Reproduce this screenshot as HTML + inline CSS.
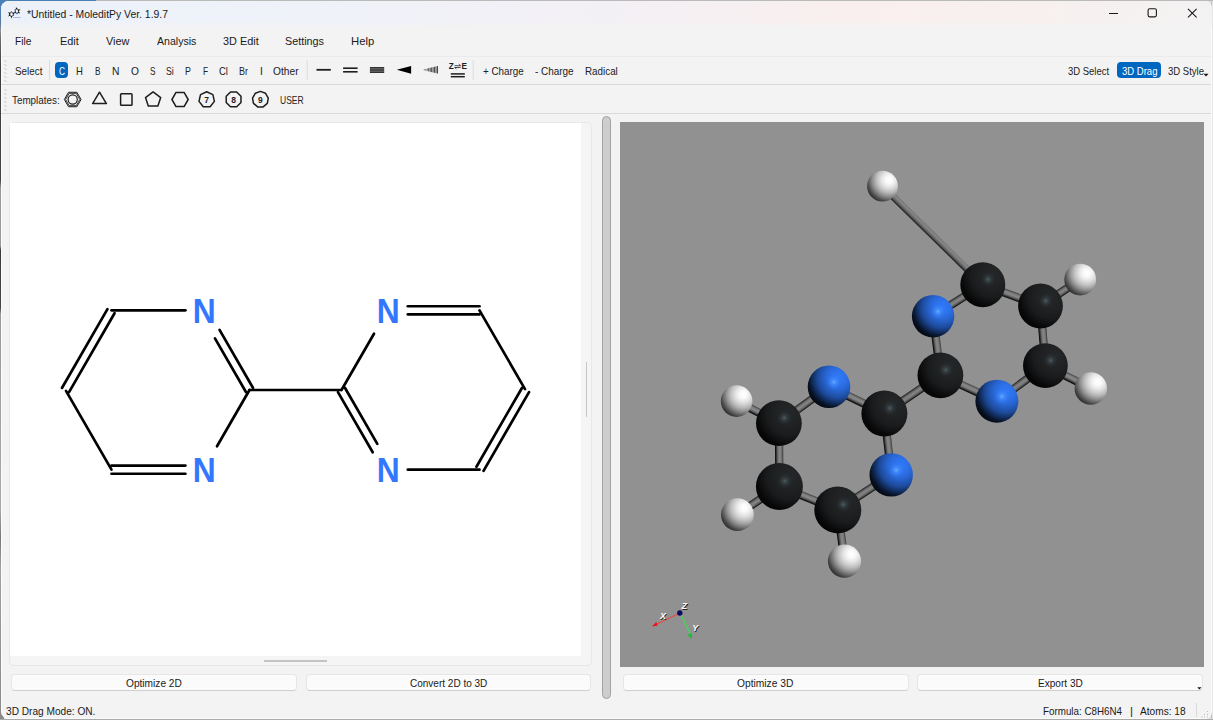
<!DOCTYPE html>
<html><head><meta charset="utf-8"><title>MoleditPy</title>
<style>
html,body{margin:0;padding:0;}
body{width:1213px;height:720px;overflow:hidden;position:relative;background:#f3f3f3;font-family:"Liberation Sans", sans-serif;}
.t{position:absolute;white-space:nowrap;font-family:"Liberation Sans", sans-serif;transform-origin:0 0;}
.abs{position:absolute;}

#win{position:absolute;left:1px;top:1px;width:1210.8px;height:717.5px;background:#f3f3f3;border-radius:8px;overflow:hidden;box-shadow:inset 0 0 0 1px rgba(255,255,255,0.75);}
#title{position:absolute;left:0;top:0;width:1213px;height:26.5px;background:linear-gradient(90deg,#ecf1f9 0%,#eff2f9 25%,#f3f0f5 50%,#f9efee 70%,#f7f0ef 85%,#f3f2f2 100%);}
.hl{position:absolute;height:1px;background:#d9d9d9;}
.btn{position:absolute;background:#fbfbfb;border:1px solid #e6e6e6;border-bottom-color:#cfcfcf;border-radius:4px;box-sizing:border-box;}
.sel{position:absolute;background:#0067c0;border-radius:4px;}

</style></head><body>

<div id="bgd" class="abs" style="left:0;top:0;width:1213px;height:720px;background:#e4e4e4"></div>
<div class="abs" style="left:0;top:0;width:1213px;height:1px;background:#bababa"></div>
<div class="abs" style="left:0;top:0;width:96px;height:12px;background:#4b80b6"></div>
<div class="abs" style="left:0;top:8px;width:4px;height:712px;background:linear-gradient(180deg,#4b80b6 0px,#56779a 14px,#8a8f96 22px,#6a6a6a 32px,#3c3c3c 60px,#444 172px,#999 180px,#999 238px,#3a3a3a 242px,#444 300px,#9a9a9a 306px,#a8a8a8 500px,#777 530px,#a0a0a0 560px,#8a8a8a 700px)"></div>
<div class="abs" style="left:0;top:718.5px;width:1213px;height:1.5px;background:#a9a9a9"></div>
<div class="abs" style="left:1211px;top:1px;width:2px;height:718px;background:linear-gradient(90deg,#c4c4c4 0,#c4c4c4 1.1px,#e6e6e6 1.1px)"></div>
<div id="win">
<div id="title"></div><div class="abs" style="left:0;top:19.5px;width:1213px;height:7px;background:linear-gradient(180deg,rgba(243,243,243,0),#f3f3f3)"></div>
</div>
<div class="hl" style="left:1px;top:56px;width:1210px;background:#ebebeb"></div>
<div class="hl" style="left:1px;top:84px;width:1210px"></div>
<div class="hl" style="left:1px;top:113px;width:1210px"></div>
<div class="sel" style="left:54.7px;top:62.1px;width:13.7px;height:15.8px"></div>
<div class="sel" style="left:1116.8px;top:62.2px;width:44.3px;height:15.8px"></div>
<div class="abs" style="left:8.5px;top:122.4px;width:583.5px;height:543.2px;border:1px solid #e8e8e8;border-radius:5px;box-sizing:border-box;background:#f5f5f5"></div>
<div class="abs" style="left:10px;top:123px;width:571.4px;height:533px;background:#fff"></div>
<div class="abs" style="left:263.5px;top:660px;width:63px;height:1.5px;background:#c4c4c4"></div>
<div class="abs" style="left:585.5px;top:362px;width:1.5px;height:55px;background:#c4c4c4"></div>
<div class="abs" style="left:602px;top:116px;width:9px;height:583px;background:#cdcdcd;border:1px solid #a2a2a2;border-radius:5px;box-sizing:border-box"></div>
<svg class="abs" style="left:0;top:120px" width="600" height="545" viewBox="0 120 600 545"><g stroke="#000" stroke-width="2.7" stroke-linecap="round"><line x1="69.05" y1="392.05" x2="114.55" y2="313.24"/><line x1="61.95" y1="387.95" x2="107.45" y2="309.14"/><line x1="111.50" y1="310.33" x2="185.40" y2="310.33"/><line x1="214.95" y1="338.36" x2="245.95" y2="392.05"/><line x1="219.55" y1="329.93" x2="253.05" y2="387.95"/><line x1="249.50" y1="390.00" x2="217.00" y2="446.29"/><line x1="185.40" y1="465.57" x2="111.50" y2="465.57"/><line x1="185.40" y1="473.77" x2="111.50" y2="473.77"/><line x1="111.50" y1="469.67" x2="66.00" y2="390.87"/><line x1="249.50" y1="390.00" x2="340.50" y2="390.00"/><line x1="341.50" y1="390.00" x2="374.00" y2="333.71"/><line x1="407.80" y1="314.43" x2="479.50" y2="314.43"/><line x1="407.80" y1="306.23" x2="479.50" y2="306.23"/><line x1="479.50" y1="310.33" x2="525.00" y2="389.13"/><line x1="521.95" y1="387.95" x2="476.45" y2="466.76"/><line x1="529.05" y1="392.05" x2="483.55" y2="470.86"/><line x1="479.50" y1="469.67" x2="407.80" y2="469.67"/><line x1="377.30" y1="443.81" x2="345.05" y2="387.95"/><line x1="372.70" y1="452.24" x2="337.95" y2="392.05"/></g><text transform="translate(204.25,323.03) scale(0.92,1)" x="0" y="0" text-anchor="middle" font-family="Liberation Sans" font-weight="700" font-size="34.6" fill="#3377ff">N</text><text transform="translate(204.25,482.37) scale(0.92,1)" x="0" y="0" text-anchor="middle" font-family="Liberation Sans" font-weight="700" font-size="34.6" fill="#3377ff">N</text><text transform="translate(388.25,323.03) scale(0.92,1)" x="0" y="0" text-anchor="middle" font-family="Liberation Sans" font-weight="700" font-size="34.6" fill="#3377ff">N</text><text transform="translate(388.25,482.37) scale(0.92,1)" x="0" y="0" text-anchor="middle" font-family="Liberation Sans" font-weight="700" font-size="34.6" fill="#3377ff">N</text></svg>
<svg class="abs" style="left:620px;top:122px;background:#919191" width="584" height="545" viewBox="620 122 584 545"><defs>
<radialGradient id="gC" cx="0.71" cy="0.29" r="0.8"><stop offset="0" stop-color="#25282a"/><stop offset="0.375" stop-color="#1f2122"/><stop offset="0.6" stop-color="#191b1c"/><stop offset="0.75" stop-color="#101112"/><stop offset="0.875" stop-color="#080808"/><stop offset="1" stop-color="#040404"/></radialGradient>
<radialGradient id="sC" cx="0.617" cy="0.383" r="0.17"><stop offset="0" stop-color="#52636a" stop-opacity="0.9"/><stop offset="0.3" stop-color="#46565c" stop-opacity="0.5"/><stop offset="1" stop-color="#2a2d2e" stop-opacity="0"/></radialGradient>
<radialGradient id="gN" cx="0.71" cy="0.29" r="0.8"><stop offset="0" stop-color="#3079f8"/><stop offset="0.2" stop-color="#2d72ec"/><stop offset="0.375" stop-color="#2865d2"/><stop offset="0.6" stop-color="#1d4a9a"/><stop offset="0.75" stop-color="#112c5c"/><stop offset="0.875" stop-color="#071224"/><stop offset="1" stop-color="#03070e"/></radialGradient>
<radialGradient id="sN" cx="0.615" cy="0.39" r="0.19"><stop offset="0" stop-color="#66acff" stop-opacity="1"/><stop offset="0.35" stop-color="#4a94ff" stop-opacity="0.6"/><stop offset="1" stop-color="#3079f5" stop-opacity="0"/></radialGradient>
<radialGradient id="gH" cx="0.71" cy="0.29" r="0.8"><stop offset="0" stop-color="#ffffff"/><stop offset="0.13" stop-color="#fbfbfb"/><stop offset="0.3" stop-color="#e5e5e5"/><stop offset="0.5" stop-color="#bebebe"/><stop offset="0.65" stop-color="#969696"/><stop offset="0.78" stop-color="#6c6c6c"/><stop offset="0.9" stop-color="#444444"/><stop offset="1" stop-color="#2c2c2c"/></radialGradient>
</defs><linearGradient id="b0" gradientUnits="userSpaceOnUse" x1="930.27" y1="237.88" x2="935.03" y2="233.02"><stop offset="0.000" stop-color="#161616"/><stop offset="0.150" stop-color="#363636"/><stop offset="0.300" stop-color="#585858"/><stop offset="0.500" stop-color="#747474"/><stop offset="0.700" stop-color="#848484"/><stop offset="0.875" stop-color="#828282"/><stop offset="0.960" stop-color="#727272"/><stop offset="1.000" stop-color="#626262"/></linearGradient><line x1="882.5" y1="186.2" x2="982.8" y2="284.7" stroke="url(#b0)" stroke-width="6.8"/><linearGradient id="b1" gradientUnits="userSpaceOnUse" x1="1010.23" y1="299.20" x2="1013.07" y2="291.50"><stop offset="0.000" stop-color="#0c0c0c"/><stop offset="0.050" stop-color="#0c0c0c"/><stop offset="0.150" stop-color="#272727"/><stop offset="0.275" stop-color="#545454"/><stop offset="0.400" stop-color="#737373"/><stop offset="0.500" stop-color="#828282"/><stop offset="0.600" stop-color="#868686"/><stop offset="0.725" stop-color="#7f7f7f"/><stop offset="0.850" stop-color="#6a6a6a"/><stop offset="0.950" stop-color="#4e4e4e"/><stop offset="1.000" stop-color="#3c3c3c"/></linearGradient><line x1="982.8" y1="284.7" x2="1040.5" y2="306.0" stroke="url(#b1)" stroke-width="8.2"/><linearGradient id="b2" gradientUnits="userSpaceOnUse" x1="1062.62" y1="296.21" x2="1058.08" y2="289.39"><stop offset="0.000" stop-color="#0c0c0c"/><stop offset="0.050" stop-color="#191919"/><stop offset="0.150" stop-color="#414141"/><stop offset="0.275" stop-color="#656565"/><stop offset="0.400" stop-color="#7b7b7b"/><stop offset="0.500" stop-color="#828282"/><stop offset="0.600" stop-color="#7f7f7f"/><stop offset="0.725" stop-color="#6e6e6e"/><stop offset="0.850" stop-color="#4f4f4f"/><stop offset="0.950" stop-color="#2c2c2c"/><stop offset="1.000" stop-color="#171717"/></linearGradient><line x1="1040.5" y1="306.0" x2="1080.2" y2="279.6" stroke="url(#b2)" stroke-width="8.2"/><linearGradient id="b3" gradientUnits="userSpaceOnUse" x1="1038.86" y1="336.14" x2="1047.04" y2="335.46"><stop offset="0.000" stop-color="#0c0c0c"/><stop offset="0.050" stop-color="#0c0c0c"/><stop offset="0.150" stop-color="#2c2c2c"/><stop offset="0.275" stop-color="#585858"/><stop offset="0.400" stop-color="#757575"/><stop offset="0.500" stop-color="#828282"/><stop offset="0.600" stop-color="#858585"/><stop offset="0.725" stop-color="#7c7c7c"/><stop offset="0.850" stop-color="#646464"/><stop offset="0.950" stop-color="#474747"/><stop offset="1.000" stop-color="#353535"/></linearGradient><line x1="1040.5" y1="306.0" x2="1045.4" y2="365.6" stroke="url(#b3)" stroke-width="8.2"/><linearGradient id="b4" gradientUnits="userSpaceOnUse" x1="1066.25" y1="380.71" x2="1069.95" y2="373.39"><stop offset="0.000" stop-color="#0c0c0c"/><stop offset="0.050" stop-color="#0c0c0c"/><stop offset="0.150" stop-color="#252525"/><stop offset="0.275" stop-color="#535353"/><stop offset="0.400" stop-color="#737373"/><stop offset="0.500" stop-color="#828282"/><stop offset="0.600" stop-color="#878787"/><stop offset="0.725" stop-color="#808080"/><stop offset="0.850" stop-color="#6b6b6b"/><stop offset="0.950" stop-color="#505050"/><stop offset="1.000" stop-color="#3e3e3e"/></linearGradient><line x1="1045.4" y1="365.6" x2="1090.8" y2="388.5" stroke="url(#b4)" stroke-width="8.2"/><linearGradient id="b5" gradientUnits="userSpaceOnUse" x1="1023.58" y1="386.71" x2="1018.72" y2="380.09"><stop offset="0.000" stop-color="#0c0c0c"/><stop offset="0.050" stop-color="#1b1b1b"/><stop offset="0.150" stop-color="#424242"/><stop offset="0.275" stop-color="#666666"/><stop offset="0.400" stop-color="#7b7b7b"/><stop offset="0.500" stop-color="#828282"/><stop offset="0.600" stop-color="#7e7e7e"/><stop offset="0.725" stop-color="#6d6d6d"/><stop offset="0.850" stop-color="#4e4e4e"/><stop offset="0.950" stop-color="#2a2a2a"/><stop offset="1.000" stop-color="#141414"/></linearGradient><line x1="1045.4" y1="365.6" x2="996.9" y2="401.2" stroke="url(#b5)" stroke-width="8.2"/><linearGradient id="b6" gradientUnits="userSpaceOnUse" x1="966.94" y1="391.98" x2="970.36" y2="384.52"><stop offset="0.000" stop-color="#0c0c0c"/><stop offset="0.050" stop-color="#0c0c0c"/><stop offset="0.150" stop-color="#252525"/><stop offset="0.275" stop-color="#545454"/><stop offset="0.400" stop-color="#737373"/><stop offset="0.500" stop-color="#828282"/><stop offset="0.600" stop-color="#878787"/><stop offset="0.725" stop-color="#808080"/><stop offset="0.850" stop-color="#6b6b6b"/><stop offset="0.950" stop-color="#4f4f4f"/><stop offset="1.000" stop-color="#3e3e3e"/></linearGradient><line x1="996.9" y1="401.2" x2="940.4" y2="375.3" stroke="url(#b6)" stroke-width="8.2"/><linearGradient id="b7" gradientUnits="userSpaceOnUse" x1="932.68" y1="346.25" x2="940.82" y2="345.25"><stop offset="0.000" stop-color="#0c0c0c"/><stop offset="0.050" stop-color="#0c0c0c"/><stop offset="0.150" stop-color="#2b2b2b"/><stop offset="0.275" stop-color="#575757"/><stop offset="0.400" stop-color="#757575"/><stop offset="0.500" stop-color="#828282"/><stop offset="0.600" stop-color="#858585"/><stop offset="0.725" stop-color="#7d7d7d"/><stop offset="0.850" stop-color="#656565"/><stop offset="0.950" stop-color="#484848"/><stop offset="1.000" stop-color="#363636"/></linearGradient><line x1="940.4" y1="375.3" x2="933.1" y2="316.2" stroke="url(#b7)" stroke-width="8.2"/><linearGradient id="b8" gradientUnits="userSpaceOnUse" x1="960.14" y1="303.91" x2="955.76" y2="296.99"><stop offset="0.000" stop-color="#0c0c0c"/><stop offset="0.050" stop-color="#181818"/><stop offset="0.150" stop-color="#404040"/><stop offset="0.275" stop-color="#656565"/><stop offset="0.400" stop-color="#7b7b7b"/><stop offset="0.500" stop-color="#828282"/><stop offset="0.600" stop-color="#7f7f7f"/><stop offset="0.725" stop-color="#6f6f6f"/><stop offset="0.850" stop-color="#505050"/><stop offset="0.950" stop-color="#2d2d2d"/><stop offset="1.000" stop-color="#181818"/></linearGradient><line x1="933.1" y1="316.2" x2="982.8" y2="284.7" stroke="url(#b8)" stroke-width="8.2"/><linearGradient id="b9" gradientUnits="userSpaceOnUse" x1="914.71" y1="397.79" x2="910.09" y2="391.01"><stop offset="0.000" stop-color="#0c0c0c"/><stop offset="0.050" stop-color="#1a1a1a"/><stop offset="0.150" stop-color="#414141"/><stop offset="0.275" stop-color="#656565"/><stop offset="0.400" stop-color="#7b7b7b"/><stop offset="0.500" stop-color="#828282"/><stop offset="0.600" stop-color="#7f7f7f"/><stop offset="0.725" stop-color="#6e6e6e"/><stop offset="0.850" stop-color="#4f4f4f"/><stop offset="0.950" stop-color="#2b2b2b"/><stop offset="1.000" stop-color="#161616"/></linearGradient><line x1="940.4" y1="375.3" x2="884.4" y2="413.5" stroke="url(#b9)" stroke-width="8.2"/><linearGradient id="b10" gradientUnits="userSpaceOnUse" x1="854.92" y1="403.84" x2="858.48" y2="396.46"><stop offset="0.000" stop-color="#0c0c0c"/><stop offset="0.050" stop-color="#0c0c0c"/><stop offset="0.150" stop-color="#252525"/><stop offset="0.275" stop-color="#535353"/><stop offset="0.400" stop-color="#737373"/><stop offset="0.500" stop-color="#828282"/><stop offset="0.600" stop-color="#878787"/><stop offset="0.725" stop-color="#808080"/><stop offset="0.850" stop-color="#6b6b6b"/><stop offset="0.950" stop-color="#4f4f4f"/><stop offset="1.000" stop-color="#3e3e3e"/></linearGradient><line x1="884.4" y1="413.5" x2="829.0" y2="386.8" stroke="url(#b10)" stroke-width="8.2"/><linearGradient id="b11" gradientUnits="userSpaceOnUse" x1="806.36" y1="408.32" x2="801.54" y2="401.68"><stop offset="0.000" stop-color="#0c0c0c"/><stop offset="0.050" stop-color="#1b1b1b"/><stop offset="0.150" stop-color="#424242"/><stop offset="0.275" stop-color="#666666"/><stop offset="0.400" stop-color="#7b7b7b"/><stop offset="0.500" stop-color="#828282"/><stop offset="0.600" stop-color="#7f7f7f"/><stop offset="0.725" stop-color="#6e6e6e"/><stop offset="0.850" stop-color="#4e4e4e"/><stop offset="0.950" stop-color="#2a2a2a"/><stop offset="1.000" stop-color="#151515"/></linearGradient><line x1="829.0" y1="386.8" x2="778.9" y2="423.2" stroke="url(#b11)" stroke-width="8.2"/><linearGradient id="b12" gradientUnits="userSpaceOnUse" x1="755.85" y1="415.78" x2="759.65" y2="408.52"><stop offset="0.000" stop-color="#0c0c0c"/><stop offset="0.050" stop-color="#0c0c0c"/><stop offset="0.150" stop-color="#252525"/><stop offset="0.275" stop-color="#535353"/><stop offset="0.400" stop-color="#737373"/><stop offset="0.500" stop-color="#828282"/><stop offset="0.600" stop-color="#878787"/><stop offset="0.725" stop-color="#808080"/><stop offset="0.850" stop-color="#6b6b6b"/><stop offset="0.950" stop-color="#505050"/><stop offset="1.000" stop-color="#3f3f3f"/></linearGradient><line x1="778.9" y1="423.2" x2="736.6" y2="401.1" stroke="url(#b12)" stroke-width="8.2"/><linearGradient id="b13" gradientUnits="userSpaceOnUse" x1="775.05" y1="454.88" x2="783.25" y2="454.82"><stop offset="0.000" stop-color="#0c0c0c"/><stop offset="0.050" stop-color="#0c0c0c"/><stop offset="0.150" stop-color="#2e2e2e"/><stop offset="0.275" stop-color="#595959"/><stop offset="0.400" stop-color="#757575"/><stop offset="0.500" stop-color="#828282"/><stop offset="0.600" stop-color="#848484"/><stop offset="0.725" stop-color="#7b7b7b"/><stop offset="0.850" stop-color="#626262"/><stop offset="0.950" stop-color="#444444"/><stop offset="1.000" stop-color="#323232"/></linearGradient><line x1="778.9" y1="423.2" x2="779.4" y2="486.5" stroke="url(#b13)" stroke-width="8.2"/><linearGradient id="b14" gradientUnits="userSpaceOnUse" x1="760.68" y1="503.96" x2="756.12" y2="497.14"><stop offset="0.000" stop-color="#0c0c0c"/><stop offset="0.050" stop-color="#191919"/><stop offset="0.150" stop-color="#414141"/><stop offset="0.275" stop-color="#656565"/><stop offset="0.400" stop-color="#7b7b7b"/><stop offset="0.500" stop-color="#828282"/><stop offset="0.600" stop-color="#7f7f7f"/><stop offset="0.725" stop-color="#6e6e6e"/><stop offset="0.850" stop-color="#4f4f4f"/><stop offset="0.950" stop-color="#2c2c2c"/><stop offset="1.000" stop-color="#171717"/></linearGradient><line x1="779.4" y1="486.5" x2="737.4" y2="514.6" stroke="url(#b14)" stroke-width="8.2"/><linearGradient id="b15" gradientUnits="userSpaceOnUse" x1="807.08" y1="502.01" x2="810.12" y2="494.39"><stop offset="0.000" stop-color="#0c0c0c"/><stop offset="0.050" stop-color="#0c0c0c"/><stop offset="0.150" stop-color="#262626"/><stop offset="0.275" stop-color="#545454"/><stop offset="0.400" stop-color="#737373"/><stop offset="0.500" stop-color="#828282"/><stop offset="0.600" stop-color="#878787"/><stop offset="0.725" stop-color="#808080"/><stop offset="0.850" stop-color="#6a6a6a"/><stop offset="0.950" stop-color="#4e4e4e"/><stop offset="1.000" stop-color="#3d3d3d"/></linearGradient><line x1="779.4" y1="486.5" x2="837.8" y2="509.9" stroke="url(#b15)" stroke-width="8.2"/><linearGradient id="b16" gradientUnits="userSpaceOnUse" x1="837.08" y1="536.08" x2="845.22" y2="535.02"><stop offset="0.000" stop-color="#0c0c0c"/><stop offset="0.050" stop-color="#0c0c0c"/><stop offset="0.150" stop-color="#2b2b2b"/><stop offset="0.275" stop-color="#575757"/><stop offset="0.400" stop-color="#747474"/><stop offset="0.500" stop-color="#828282"/><stop offset="0.600" stop-color="#858585"/><stop offset="0.725" stop-color="#7d7d7d"/><stop offset="0.850" stop-color="#656565"/><stop offset="0.950" stop-color="#484848"/><stop offset="1.000" stop-color="#363636"/></linearGradient><line x1="837.8" y1="509.9" x2="844.5" y2="561.2" stroke="url(#b16)" stroke-width="8.2"/><linearGradient id="b17" gradientUnits="userSpaceOnUse" x1="866.75" y1="495.83" x2="862.25" y2="488.97"><stop offset="0.000" stop-color="#0c0c0c"/><stop offset="0.050" stop-color="#191919"/><stop offset="0.150" stop-color="#414141"/><stop offset="0.275" stop-color="#656565"/><stop offset="0.400" stop-color="#7b7b7b"/><stop offset="0.500" stop-color="#828282"/><stop offset="0.600" stop-color="#7f7f7f"/><stop offset="0.725" stop-color="#6f6f6f"/><stop offset="0.850" stop-color="#505050"/><stop offset="0.950" stop-color="#2c2c2c"/><stop offset="1.000" stop-color="#171717"/></linearGradient><line x1="837.8" y1="509.9" x2="891.2" y2="474.9" stroke="url(#b17)" stroke-width="8.2"/><linearGradient id="b18" gradientUnits="userSpaceOnUse" x1="883.72" y1="444.65" x2="891.88" y2="443.75"><stop offset="0.000" stop-color="#0c0c0c"/><stop offset="0.050" stop-color="#0c0c0c"/><stop offset="0.150" stop-color="#2b2b2b"/><stop offset="0.275" stop-color="#575757"/><stop offset="0.400" stop-color="#757575"/><stop offset="0.500" stop-color="#828282"/><stop offset="0.600" stop-color="#858585"/><stop offset="0.725" stop-color="#7c7c7c"/><stop offset="0.850" stop-color="#656565"/><stop offset="0.950" stop-color="#484848"/><stop offset="1.000" stop-color="#353535"/></linearGradient><line x1="891.2" y1="474.9" x2="884.4" y2="413.5" stroke="url(#b18)" stroke-width="8.2"/><circle cx="882.5" cy="186.2" r="15.4" fill="url(#gH)"/><circle cx="982.8" cy="284.7" r="22.5" fill="url(#gC)"/><circle cx="982.8" cy="284.7" r="22.5" fill="url(#sC)"/><circle cx="1040.5" cy="306.0" r="22.4" fill="url(#gC)"/><circle cx="1040.5" cy="306.0" r="22.4" fill="url(#sC)"/><circle cx="1080.2" cy="279.6" r="15.9" fill="url(#gH)"/><circle cx="933.1" cy="316.2" r="21.2" fill="url(#gN)"/><circle cx="933.1" cy="316.2" r="21.2" fill="url(#sN)"/><circle cx="1045.4" cy="365.6" r="22.4" fill="url(#gC)"/><circle cx="1045.4" cy="365.6" r="22.4" fill="url(#sC)"/><circle cx="1090.8" cy="388.5" r="16.2" fill="url(#gH)"/><circle cx="940.4" cy="375.3" r="22.9" fill="url(#gC)"/><circle cx="940.4" cy="375.3" r="22.9" fill="url(#sC)"/><circle cx="996.9" cy="401.2" r="21.5" fill="url(#gN)"/><circle cx="996.9" cy="401.2" r="21.5" fill="url(#sN)"/><circle cx="829.0" cy="386.8" r="21.3" fill="url(#gN)"/><circle cx="829.0" cy="386.8" r="21.3" fill="url(#sN)"/><circle cx="884.4" cy="413.5" r="23.0" fill="url(#gC)"/><circle cx="884.4" cy="413.5" r="23.0" fill="url(#sC)"/><circle cx="736.6" cy="401.1" r="15.8" fill="url(#gH)"/><circle cx="778.9" cy="423.2" r="22.9" fill="url(#gC)"/><circle cx="778.9" cy="423.2" r="22.9" fill="url(#sC)"/><circle cx="891.2" cy="474.9" r="21.7" fill="url(#gN)"/><circle cx="891.2" cy="474.9" r="21.7" fill="url(#sN)"/><circle cx="779.4" cy="486.5" r="23.5" fill="url(#gC)"/><circle cx="779.4" cy="486.5" r="23.5" fill="url(#sC)"/><circle cx="837.8" cy="509.9" r="23.5" fill="url(#gC)"/><circle cx="837.8" cy="509.9" r="23.5" fill="url(#sC)"/><circle cx="737.4" cy="514.6" r="16.4" fill="url(#gH)"/><circle cx="844.5" cy="561.2" r="16.6" fill="url(#gH)"/><line x1="680" y1="613" x2="656" y2="624.5" stroke="#e84a4a" stroke-width="1.2"/><polygon points="652,626.5 656.2,622 657.8,625.6" fill="#ee1010"/><line x1="680" y1="613" x2="690.5" y2="634" stroke="#3fd654" stroke-width="1.4"/><polygon points="692,639 687.6,635 691.6,633" fill="#18c030"/><circle cx="679.8" cy="613" r="2.7" fill="#0a0a66"/><text x="660.8" y="619.6999999999999" font-family="Liberation Sans" font-weight="700" font-style="italic" font-size="9" fill="#222">X</text><text x="660.0" y="618.9" font-family="Liberation Sans" font-weight="700" font-style="italic" font-size="9" fill="#fff">X</text><text x="682.4" y="609.5999999999999" font-family="Liberation Sans" font-weight="700" font-style="italic" font-size="9" fill="#222">Z</text><text x="681.6" y="608.8" font-family="Liberation Sans" font-weight="700" font-style="italic" font-size="9" fill="#fff">Z</text><text x="693.0999999999999" y="631.6999999999999" font-family="Liberation Sans" font-weight="700" font-style="italic" font-size="9" fill="#222">Y</text><text x="692.3" y="630.9" font-family="Liberation Sans" font-weight="700" font-style="italic" font-size="9" fill="#fff">Y</text></svg>
<div class="btn" style="left:10.5px;top:674.2px;width:286px;height:17.2px"></div>
<div class="btn" style="left:305.5px;top:674.2px;width:285px;height:17.2px"></div>
<div class="btn" style="left:622.5px;top:674.2px;width:286px;height:17.2px"></div>
<div class="btn" style="left:917px;top:674.2px;width:285.5px;height:17.2px"></div>
<svg class="abs" style="left:1190px;top:680px" width="20" height="40" viewBox="1190 680 20 40"><polygon points="1197.3,687.2 1201.5,687.2 1199.4,689.6" fill="#111"/>
<rect x="1196" y="703" width="1" height="14" fill="#d9d9d9"/>
<g fill="#b9b9b9"><rect x="1207" y="711" width="1" height="1"/><rect x="1207" y="714" width="1" height="1"/><rect x="1204" y="714" width="1" height="1"/><rect x="1207" y="716.5" width="1" height="1"/><rect x="1204" y="716.5" width="1" height="1"/><rect x="1201.5" y="716.5" width="1" height="1"/></g></svg>
<svg class="abs" style="left:0;top:0" width="1213" height="120" viewBox="0 0 1213 120"><rect x="4.4" y="60" width="1" height="1" fill="#c2c2c2"/><rect x="5.4" y="61" width="1" height="1" fill="#c2c2c2"/><rect x="4.4" y="64" width="1" height="1" fill="#c2c2c2"/><rect x="5.4" y="65" width="1" height="1" fill="#c2c2c2"/><rect x="4.4" y="68" width="1" height="1" fill="#c2c2c2"/><rect x="5.4" y="69" width="1" height="1" fill="#c2c2c2"/><rect x="4.4" y="72" width="1" height="1" fill="#c2c2c2"/><rect x="5.4" y="73" width="1" height="1" fill="#c2c2c2"/><rect x="4.4" y="76" width="1" height="1" fill="#c2c2c2"/><rect x="5.4" y="77" width="1" height="1" fill="#c2c2c2"/><rect x="4.4" y="80" width="1" height="1" fill="#c2c2c2"/><rect x="5.4" y="81" width="1" height="1" fill="#c2c2c2"/><rect x="4.4" y="89" width="1" height="1" fill="#c2c2c2"/><rect x="5.4" y="90" width="1" height="1" fill="#c2c2c2"/><rect x="4.4" y="93" width="1" height="1" fill="#c2c2c2"/><rect x="5.4" y="94" width="1" height="1" fill="#c2c2c2"/><rect x="4.4" y="97" width="1" height="1" fill="#c2c2c2"/><rect x="5.4" y="98" width="1" height="1" fill="#c2c2c2"/><rect x="4.4" y="101" width="1" height="1" fill="#c2c2c2"/><rect x="5.4" y="102" width="1" height="1" fill="#c2c2c2"/><rect x="4.4" y="105" width="1" height="1" fill="#c2c2c2"/><rect x="5.4" y="106" width="1" height="1" fill="#c2c2c2"/><rect x="4.4" y="109" width="1" height="1" fill="#c2c2c2"/><rect x="5.4" y="110" width="1" height="1" fill="#c2c2c2"/><rect x="49.0" y="60" width="1" height="20" fill="#dcdcdc"/><rect x="306.7" y="60" width="1" height="20" fill="#dcdcdc"/><rect x="472.7" y="60" width="1" height="20" fill="#dcdcdc"/><line x1="316.5" y1="69.8" x2="330.8" y2="69.8" stroke="#1e1e1e" stroke-width="1.8"/><line x1="343.1" y1="68.2" x2="357.6" y2="68.2" stroke="#1e1e1e" stroke-width="1.6"/><line x1="343.1" y1="71.8" x2="357.6" y2="71.8" stroke="#1e1e1e" stroke-width="1.6"/><line x1="369.9" y1="67.9" x2="384.2" y2="67.9" stroke="#1e1e1e" stroke-width="1.6"/><line x1="369.9" y1="70.0" x2="384.2" y2="70.0" stroke="#1e1e1e" stroke-width="1.6"/><line x1="369.9" y1="72.1" x2="384.2" y2="72.1" stroke="#1e1e1e" stroke-width="1.6"/><polygon points="396.8,69.8 411.1,65.9 411.1,73.8" fill="#000"/><line x1="424.30" y1="69.23" x2="424.30" y2="70.37" stroke="#6a6a6a" stroke-width="0.95"/><line x1="425.77" y1="68.88" x2="425.77" y2="70.72" stroke="#6a6a6a" stroke-width="0.95"/><line x1="427.24" y1="68.52" x2="427.24" y2="71.08" stroke="#6a6a6a" stroke-width="0.95"/><line x1="428.71" y1="68.17" x2="428.71" y2="71.43" stroke="#3c3c3c" stroke-width="0.95"/><line x1="430.18" y1="67.81" x2="430.18" y2="71.79" stroke="#3c3c3c" stroke-width="0.95"/><line x1="431.65" y1="67.46" x2="431.65" y2="72.14" stroke="#3c3c3c" stroke-width="0.95"/><line x1="433.12" y1="67.10" x2="433.12" y2="72.50" stroke="#3c3c3c" stroke-width="0.95"/><line x1="434.59" y1="66.75" x2="434.59" y2="72.85" stroke="#3c3c3c" stroke-width="0.95"/><line x1="436.06" y1="66.39" x2="436.06" y2="73.21" stroke="#3c3c3c" stroke-width="0.95"/><line x1="437.53" y1="66.04" x2="437.53" y2="73.56" stroke="#3c3c3c" stroke-width="0.95"/><text x="451.2" y="69.2" text-anchor="middle" font-family="Liberation Sans" font-weight="700" font-size="8.2" fill="#1e1e1e">Z</text><text x="464.3" y="69.2" text-anchor="middle" font-family="Liberation Sans" font-weight="700" font-size="8.2" fill="#1e1e1e">E</text><path d="M454.6 65.7 H460.6 L458.8 64.2 M460.6 67.5 H454.6 L456.4 69.0" stroke="#1e1e1e" stroke-width="0.8" fill="none"/><line x1="450.8" y1="73.9" x2="464.8" y2="73.9" stroke="#1e1e1e" stroke-width="1.5"/><line x1="450.8" y1="76.7" x2="464.8" y2="76.7" stroke="#1e1e1e" stroke-width="1.5"/><polygon points="1203.5,73.8 1208.5,73.8 1206,76.6" fill="#111"/><line x1="1109" y1="13.5" x2="1118" y2="13.5" stroke="#1a1a1a" stroke-width="1"/><rect x="1148.1" y="8.75" width="8.3" height="8.1" rx="1.5" fill="none" stroke="#1a1a1a" stroke-width="1.1"/><path d="M1188 8.8 L1196.6 17.4 M1196.6 8.8 L1188 17.4" stroke="#1a1a1a" stroke-width="1.1" fill="none"/><polygon points="81.05,99.50 76.88,106.73 68.53,106.73 64.35,99.50 68.53,92.27 76.88,92.27" fill="none" stroke="#1e1e1e" stroke-width="1.0"/><polygon points="79.85,99.50 76.28,105.69 69.12,105.69 65.55,99.50 69.12,93.31 76.28,93.31" fill="none" stroke="#1e1e1e" stroke-width="0.9"/><circle cx="72.7" cy="99.5" r="4.6" fill="none" stroke="#1e1e1e" stroke-width="1.2"/><polygon points="99.5,92.2 106.4,103.6 92.6,103.6" fill="none" stroke="#1e1e1e" stroke-width="1.5" stroke-linejoin="round"/><rect x="120.6" y="93.8" width="11.4" height="11.4" rx="0.8" fill="none" stroke="#1e1e1e" stroke-width="1.5"/><polygon points="153.1,91.9 160.7,97.6 157.9,106 148.3,106 145.5,97.6" fill="none" stroke="#1e1e1e" stroke-width="1.5" stroke-linejoin="round"/><polygon points="188.15,99.50 184.10,106.51 176.00,106.51 171.95,99.50 176.00,92.49 184.10,92.49" fill="none" stroke="#1e1e1e" stroke-width="1.5" stroke-linejoin="round"/><polygon points="206.70,91.70 212.88,94.67 214.40,101.36 210.13,106.72 203.27,106.72 199.00,101.36 200.52,94.67" fill="none" stroke="#1e1e1e" stroke-width="1.5" stroke-linejoin="round"/><polygon points="240.99,102.46 236.66,106.79 230.54,106.79 226.21,102.46 226.21,96.34 230.54,92.01 236.66,92.01 240.99,96.34" fill="none" stroke="#1e1e1e" stroke-width="1.5" stroke-linejoin="round"/><polygon points="260.40,91.40 265.54,93.27 268.28,98.01 267.33,103.40 263.14,106.92 257.66,106.92 253.47,103.40 252.52,98.01 255.26,93.27" fill="none" stroke="#1e1e1e" stroke-width="1.5" stroke-linejoin="round"/><text x="206.7" y="102.6" text-anchor="middle" font-family="Liberation Sans" font-weight="700" font-size="8.5" fill="#1e1e1e">7</text><text x="233.6" y="102.6" text-anchor="middle" font-family="Liberation Sans" font-weight="700" font-size="8.5" fill="#1e1e1e">8</text><text x="260.4" y="102.6" text-anchor="middle" font-family="Liberation Sans" font-weight="700" font-size="8.5" fill="#1e1e1e">9</text><circle cx="11.4" cy="14.2" r="3.6" fill="#fff" opacity="0.55"/><circle cx="16.9" cy="11.0" r="3.6" fill="#fff" opacity="0.55"/><polygon points="11.4,12.0 13.4,13.4 13.4,15.2 11.5,16.5 9.6,15.2 9.6,13.3" fill="none" stroke="#3a3a3a" stroke-width="0.7"/><polygon points="15.25,9.9 16.6,8.6 18.6,10.2 18.6,12.3 16.9,13.4 15.25,12.3" fill="none" stroke="#3a3a3a" stroke-width="0.7"/><path d="M13.4 13.4 L15.25 12.3 M9.6 13.3 L8.2 12.3 M9.6 15.2 L8.4 16.3 M11.5 16.5 L11.5 18.3 M16.6 8.6 L16.2 7.4 M18.6 10.2 L20.4 9.25 M18.6 12.3 L20 13.4" stroke="#444" stroke-width="0.7" fill="none"/><circle cx="11.4" cy="12.0" r="0.85" fill="#3d6fd0"/><circle cx="13.4" cy="13.4" r="0.85" fill="#1c1c1c"/><circle cx="13.4" cy="15.2" r="0.85" fill="#3d6fd0"/><circle cx="11.5" cy="16.5" r="0.85" fill="#1c1c1c"/><circle cx="9.6" cy="15.2" r="0.85" fill="#1c1c1c"/><circle cx="9.6" cy="13.3" r="0.85" fill="#1c1c1c"/><circle cx="15.25" cy="9.9" r="0.85" fill="#3d6fd0"/><circle cx="16.6" cy="8.6" r="0.85" fill="#1c1c1c"/><circle cx="18.6" cy="10.2" r="0.85" fill="#1c1c1c"/><circle cx="18.6" cy="12.3" r="0.85" fill="#1c1c1c"/><circle cx="16.9" cy="13.4" r="0.85" fill="#3d6fd0"/><circle cx="15.25" cy="12.3" r="0.85" fill="#1c1c1c"/><rect x="13" y="17.3" width="7.7" height="0.6" fill="#4a6fb5" opacity="0.7"/></svg>

<span class="t" style="left:27.20px;top:5.58px;font-size:11.6px;line-height:16px;font-weight:400;color:#1a1a1a;font-style:normal;transform:scaleX(0.8967)">*Untitled - MoleditPy Ver. 1.9.7</span>
<span class="t" style="left:14.80px;top:32.98px;font-size:11.6px;line-height:16px;font-weight:400;color:#1a1a1a;font-style:normal;transform:scaleX(0.8775)">File</span>
<span class="t" style="left:59.70px;top:32.98px;font-size:11.6px;line-height:16px;font-weight:400;color:#1a1a1a;font-style:normal;transform:scaleX(0.9346)">Edit</span>
<span class="t" style="left:106.30px;top:32.98px;font-size:11.6px;line-height:16px;font-weight:400;color:#1a1a1a;font-style:normal;transform:scaleX(0.9394)">View</span>
<span class="t" style="left:156.60px;top:32.98px;font-size:11.6px;line-height:16px;font-weight:400;color:#1a1a1a;font-style:normal;transform:scaleX(0.9107)">Analysis</span>
<span class="t" style="left:222.50px;top:32.98px;font-size:11.6px;line-height:16px;font-weight:400;color:#1a1a1a;font-style:normal;transform:scaleX(0.9382)">3D Edit</span>
<span class="t" style="left:284.80px;top:32.98px;font-size:11.6px;line-height:16px;font-weight:400;color:#1a1a1a;font-style:normal;transform:scaleX(0.9289)">Settings</span>
<span class="t" style="left:351.10px;top:32.98px;font-size:11.6px;line-height:16px;font-weight:400;color:#1a1a1a;font-style:normal;transform:scaleX(0.9745)">Help</span>
<span class="t" style="left:14.50px;top:64.53px;font-size:10.3px;line-height:14px;font-weight:400;color:#222222;font-style:normal;transform:scaleX(0.9563)">Select</span>
<span class="t" style="left:59.20px;top:64.53px;font-size:10.3px;line-height:14px;font-weight:400;color:#ffffff;font-style:normal;transform:scaleX(0.8000)">C</span>
<span class="t" style="left:75.80px;top:64.53px;font-size:10.3px;line-height:14px;font-weight:400;color:#222222;font-style:normal;transform:scaleX(0.9286)">H</span>
<span class="t" style="left:95.00px;top:64.53px;font-size:10.3px;line-height:14px;font-weight:400;color:#222222;font-style:normal;transform:scaleX(0.8000)">B</span>
<span class="t" style="left:112.00px;top:64.53px;font-size:10.3px;line-height:14px;font-weight:400;color:#222222;font-style:normal;transform:scaleX(1.0000)">N</span>
<span class="t" style="left:130.60px;top:64.53px;font-size:10.3px;line-height:14px;font-weight:400;color:#222222;font-style:normal;transform:scaleX(0.9875)">O</span>
<span class="t" style="left:149.70px;top:64.53px;font-size:10.3px;line-height:14px;font-weight:400;color:#222222;font-style:normal;transform:scaleX(0.8000)">S</span>
<span class="t" style="left:165.90px;top:64.53px;font-size:10.3px;line-height:14px;font-weight:400;color:#222222;font-style:normal;transform:scaleX(0.8457)">Si</span>
<span class="t" style="left:185.00px;top:64.53px;font-size:10.3px;line-height:14px;font-weight:400;color:#222222;font-style:normal;transform:scaleX(0.8571)">P</span>
<span class="t" style="left:202.70px;top:64.53px;font-size:10.3px;line-height:14px;font-weight:400;color:#222222;font-style:normal;transform:scaleX(0.8000)">F</span>
<span class="t" style="left:218.90px;top:64.53px;font-size:10.3px;line-height:14px;font-weight:400;color:#222222;font-style:normal;transform:scaleX(0.9220)">Cl</span>
<span class="t" style="left:239.00px;top:64.53px;font-size:10.3px;line-height:14px;font-weight:400;color:#222222;font-style:normal;transform:scaleX(0.8741)">Br</span>
<span class="t" style="left:260.00px;top:64.53px;font-size:10.3px;line-height:14px;font-weight:400;color:#222222;font-style:normal;transform:scaleX(1.0000)">I</span>
<span class="t" style="left:273.40px;top:64.53px;font-size:10.3px;line-height:14px;font-weight:400;color:#222222;font-style:normal;transform:scaleX(0.9915)">Other</span>
<span class="t" style="left:482.70px;top:64.53px;font-size:10.3px;line-height:14px;font-weight:400;color:#222222;font-style:normal;transform:scaleX(0.9553)">+ Charge</span>
<span class="t" style="left:534.90px;top:64.53px;font-size:10.3px;line-height:14px;font-weight:400;color:#222222;font-style:normal;transform:scaleX(0.9644)">- Charge</span>
<span class="t" style="left:585.00px;top:64.53px;font-size:10.3px;line-height:14px;font-weight:400;color:#222222;font-style:normal;transform:scaleX(0.9544)">Radical</span>
<span class="t" style="left:1067.90px;top:64.53px;font-size:10.3px;line-height:14px;font-weight:400;color:#222222;font-style:normal;transform:scaleX(0.9200)">3D Select</span>
<span class="t" style="left:1121.60px;top:64.53px;font-size:10.3px;line-height:14px;font-weight:400;color:#ffffff;font-style:normal;transform:scaleX(0.9245)">3D Drag</span>
<span class="t" style="left:1168.00px;top:64.53px;font-size:10.3px;line-height:14px;font-weight:400;color:#222222;font-style:normal;transform:scaleX(0.9263)">3D Style</span>
<span class="t" style="left:12.10px;top:94.13px;font-size:10.3px;line-height:14px;font-weight:400;color:#222222;font-style:normal;transform:scaleX(0.9565)">Templates:</span>
<span class="t" style="left:279.80px;top:94.13px;font-size:10.3px;line-height:14px;font-weight:400;color:#222222;font-style:normal;transform:scaleX(0.8271)">USER</span>
<span class="t" style="left:125.50px;top:675.28px;font-size:11.6px;line-height:16px;font-weight:400;color:#1a1a1a;font-style:normal;transform:scaleX(0.8753)">Optimize 2D</span>
<span class="t" style="left:409.50px;top:675.28px;font-size:11.6px;line-height:16px;font-weight:400;color:#1a1a1a;font-style:normal;transform:scaleX(0.8633)">Convert 2D to 3D</span>
<span class="t" style="left:737.00px;top:675.28px;font-size:11.6px;line-height:16px;font-weight:400;color:#1a1a1a;font-style:normal;transform:scaleX(0.8831)">Optimize 3D</span>
<span class="t" style="left:1037.50px;top:675.28px;font-size:11.6px;line-height:16px;font-weight:400;color:#1a1a1a;font-style:normal;transform:scaleX(0.8695)">Export 3D</span>
<span class="t" style="left:5.80px;top:702.98px;font-size:11.6px;line-height:16px;font-weight:400;color:#1a1a1a;font-style:normal;transform:scaleX(0.8726)">3D Drag Mode: ON.</span>
<span class="t" style="left:1042.50px;top:702.98px;font-size:11.6px;line-height:16px;font-weight:400;color:#1a1a1a;font-style:normal;transform:scaleX(0.8460)">Formula: C8H6N4</span>
<span class="t" style="left:1130.00px;top:702.98px;font-size:11.6px;line-height:16px;font-weight:400;color:#1a1a1a;font-style:normal;transform:scaleX(1.0000)">|</span>
<span class="t" style="left:1140.20px;top:702.98px;font-size:11.6px;line-height:16px;font-weight:400;color:#1a1a1a;font-style:normal;transform:scaleX(0.8735)">Atoms: 18</span>

</body></html>
